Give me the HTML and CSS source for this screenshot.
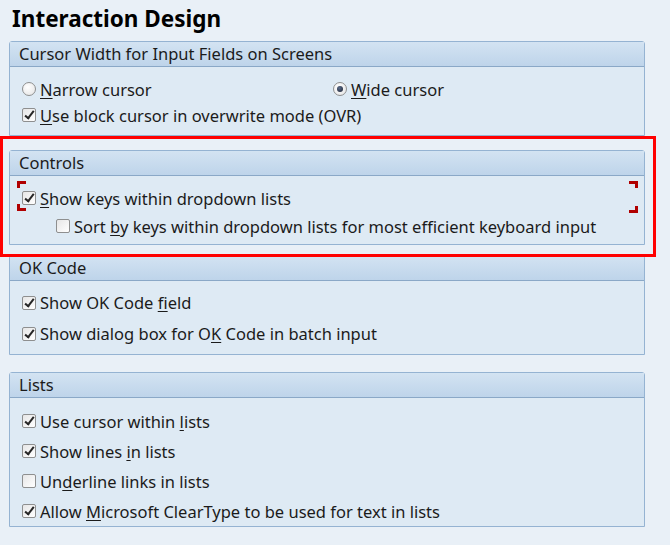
FILE: index.html
```html
<!DOCTYPE html>
<html>
<head>
<meta charset="utf-8">
<link rel="stylesheet" href="styles.css">
</head>
<body>
<div class="page">
  <h1 class="title">Interaction Design</h1>

  <section class="group g1">
    <div class="ghead">Cursor Width for Input Fields on Screens</div>
    <div class="gbody">
      <div class="row r1">
        <label class="opt narrow"><span class="radio"></span><span><u>N</u>arrow cursor</span></label>
        <label class="opt"><span class="radio on"></span><span><u>W</u>ide cursor</span></label>
      </div>
      <div class="row r1">
        <label class="opt"><span class="cb on"></span><span><u>U</u>se block cursor in overwrite mode (OVR)</span></label>
      </div>
    </div>
  </section>

  <section class="group g2">
    <div class="ghead">Controls</div>
    <div class="gbody">
      <div class="row r2 focus">
        <label class="opt"><span class="cb on"></span><span><u>S</u>how keys within dropdown lists</span></label>
        <span class="br tl"></span><span class="br bl"></span><span class="br tr"></span><span class="br brr"></span>
      </div>
      <div class="row r2 indent">
        <label class="opt"><span class="cb"></span><span>Sort <u>b</u>y keys within dropdown lists for most efficient keyboard input</span></label>
      </div>
    </div>
  </section>

  <section class="group g3">
    <div class="ghead">OK Code</div>
    <div class="gbody">
      <div class="row r3">
        <label class="opt"><span class="cb on"></span><span>Show OK Code <u>f</u>ield</span></label>
      </div>
      <div class="row r3">
        <label class="opt"><span class="cb on"></span><span>Show dialog box for O<u>K</u> Code in batch input</span></label>
      </div>
    </div>
  </section>

  <section class="group g4">
    <div class="ghead">Lists</div>
    <div class="gbody">
      <div class="row r4">
        <label class="opt"><span class="cb on"></span><span>Use cursor within <u>l</u>ists</span></label>
      </div>
      <div class="row r4">
        <label class="opt"><span class="cb on"></span><span>Show lines <u>i</u>n lists</span></label>
      </div>
      <div class="row r4">
        <label class="opt"><span class="cb"></span><span>Un<u>d</u>erline links in lists</span></label>
      </div>
      <div class="row r4">
        <label class="opt"><span class="cb on"></span><span>Allow <u>M</u>icrosoft ClearType to be used for text in lists</span></label>
      </div>
    </div>
  </section>

  <div class="highlight"></div>
</div>
</body>
</html>
```

FILE: styles.css
```css
html, body {
  margin: 0;
  padding: 0;
  background: #e9f0f7;
}
body {
  font-family: "Noto Sans", "Open Sans", "DejaVu Sans", sans-serif;
  font-size: 16.5px;
  color: #1b1b1b;
}
.page {
  position: relative;
  width: 670px;
  height: 545px;
  padding: 0 0 0 9px;
  box-sizing: border-box;
}
.title {
  margin: 0;
  padding: 4px 0 0 3px;
  height: 37px;
  box-sizing: border-box;
  font-size: 22.5px;
  font-weight: bold;
  line-height: 30px;
  color: #000;
}
.group {
  width: 636px;
  box-sizing: border-box;
  border: 1px solid #95b3d2;
  border-radius: 3px 3px 0 0;
  background: #deeaf4;
}
.g1 { margin-top: 4px; }
.g2 { margin-top: 14px; }
.g3 { margin-top: 10px; }
.g4 { margin-top: 17px; }
.ghead {
  height: 25px;
  box-sizing: border-box;
  border-bottom: 1px solid #8aa8c7;
  background: linear-gradient(#d3e3f2, #bed4ea);
  padding-left: 9px;
  line-height: 24px;
  color: #1b1b1b;
}
.gbody {
  padding: 8px 0 4px 12px;
}
.g1 .gbody { padding: 9px 0 7px 12px; }
.g3 .gbody { padding: 6px 0 5px 12px; }
.g4 .gbody { padding: 8px 0 0 12px; }
.row {
  position: relative;
  display: flex;
  align-items: center;
}
.r1 { height: 26px; }
.r2 { height: 28px; }
.r3 { height: 31px; }
.r4 { height: 30px; }
.indent { padding-left: 34px; }
.opt {
  display: flex;
  align-items: center;
  gap: 4px;
  white-space: nowrap;
}
.narrow { width: 311px; }
u { text-decoration-thickness: 1px; text-underline-offset: 2px; }
.cb {
  width: 14px;
  height: 14px;
  box-sizing: border-box;
  border: 1px solid #8e8f8f;
  border-radius: 2px;
  background: linear-gradient(135deg, #e6e6e6, #ffffff);
  position: relative;
  flex: none;
}
.cb.on::after {
  content: "";
  position: absolute;
  left: 4px;
  top: 0px;
  width: 3px;
  height: 8px;
  border: solid #262626;
  border-width: 0 2px 2px 0;
  transform: rotate(38deg);
}
.radio {
  width: 14px;
  height: 14px;
  box-sizing: border-box;
  border: 1px solid #8e8f8f;
  border-radius: 50%;
  background: radial-gradient(circle at 40% 35%, #ffffff, #e3e3e3);
  position: relative;
  flex: none;
}
.radio.on::after {
  content: "";
  position: absolute;
  left: 3px;
  top: 3px;
  width: 6px;
  height: 6px;
  border-radius: 50%;
  background: radial-gradient(circle at 40% 35%, #5a6c8a, #1a2030);
}
.br {
  position: absolute;
  width: 9px;
  height: 7px;
  box-sizing: border-box;
  border-color: #b00000;
  border-style: solid;
  border-width: 0;
}
.tl { left: -5px; top: -3px; border-width: 3px 0 0 3px; }
.bl { left: -5px; top: 20px; border-width: 0 0 3px 3px; }
.tr { left: 607px; top: -3px; border-width: 3px 3px 0 0; }
.brr { left: 607px; top: 22px; border-width: 0 3px 3px 0; }
.highlight {
  position: absolute;
  left: 0;
  top: 136px;
  width: 656px;
  height: 121px;
  box-sizing: border-box;
  border: 3px solid #f00;
  pointer-events: none;
}
```
